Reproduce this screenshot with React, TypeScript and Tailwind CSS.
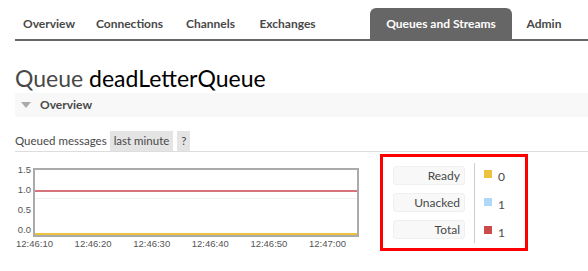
import React from "react";

const tabs = [
  { name: "Overview", w: "w-[68px]" },
  { name: "Connections", w: "w-[93px]" },
  { name: "Channels", w: "w-[69px]" },
  { name: "Exchanges", w: "w-[85px] mr-[40px]" },
  { name: "Queues and Streams", w: "w-[142px]" },
  { name: "Admin", w: "w-[64px]" },
];

const xLabels = ["12:46:10", "12:46:20", "12:46:30", "12:46:40", "12:46:50", "12:47:00"];

const legend = [
  { label: "Ready", color: "bg-[#edc240]", value: "0" },
  { label: "Unacked", color: "bg-[#afd8f8]", value: "1" },
  { label: "Total", color: "bg-[#cb4b4b]", value: "1" },
];

const App = () => {
  return (
    <div className="w-[588px] h-[271px] overflow-hidden bg-white pl-[15px] text-[#484848] font-['Lato','Open_Sans',sans-serif]">
      <nav className="flex items-end h-[41px] border-b-2 border-[#666]">
        {tabs.map((t) => (
          <div
            key={t.name}
            className={`${t.w} shrink-0 h-[31px] flex items-center justify-center whitespace-nowrap text-[12px] font-bold rounded-t-[6px] ${
              t.name === "Queues and Streams" ? "bg-[#666] text-white" : "text-[#484848]"
            }`}
          >
            {t.name}
          </div>
        ))}
      </nav>

      <h1 className="mt-[23px] text-[23px] leading-[28px] font-normal text-[#484848]">
        Queue <span className="text-black">deadLetterQueue</span>
      </h1>

      <div className="mt-[1px] h-[24px] bg-[#f8f8f8] flex items-center pl-[6px] gap-[9px]">
        <span className="w-0 h-0 border-l-[5px] border-r-[5px] border-t-[6px] border-l-transparent border-r-transparent border-t-[#aaa]" />
        <span className="text-[12px] font-bold">Overview</span>
      </div>

      <div className="mt-[15px] flex items-end h-[20px] border-b border-[#ddd] text-[11.5px]">
        <span className="mr-[3px] leading-[20px]">Queued messages</span>
        <span className="bg-[#e4e4e4] px-[4px] leading-[20px]">last minute</span>
        <span className="bg-[#e4e4e4] ml-[4px] px-[4px] leading-[20px]">?</span>
      </div>

      <div className="flex">
        <div className="mt-[16px] w-[350px] font-['Liberation_Sans',sans-serif] text-[9.5px] text-[#555]">
          <div className="flex">
            <div className="w-[16px] flex flex-col justify-between text-right leading-[10px] h-[70px] -mt-[3px]">
              <span>1.5</span>
              <span>1.0</span>
              <span>0.5</span>
              <span>0.0</span>
            </div>
            <div className="ml-[2px] w-[326px] h-[69px] border-2 border-[#aaa] relative">
              <div className="absolute left-0 right-0 top-[43%] h-px bg-[#f2f2f2]" />
              <div className="absolute left-0 right-0 top-[20px] h-[2px] bg-[#d7737a]" />
              <div className="absolute left-0 right-0 bottom-0 h-[2px] bg-[#edc240]" />
            </div>
          </div>
          <div className="flex mt-[1px] leading-[11px] pl-[1px]">
            {xLabels.map((l) => (
              <span key={l} className="w-[58.6px] shrink-0">
                {l}
              </span>
            ))}
          </div>
        </div>

        <div className="mt-[2px] ml-[15px] w-[148px] h-[97px] border-[3px] border-[#ff0000] flex items-center pl-[10px]">
          <div className="flex flex-col gap-[8px] w-[72px]">
            {legend.map((l) => (
              <div
                key={l.label}
                className="h-[19px] bg-[#f8f8f8] border border-[#f0f0f0] rounded-[3px] text-right pr-[4px] text-[12px] leading-[17px]"
              >
                {l.label}
              </div>
            ))}
          </div>
          <div className="ml-[9px] w-px h-[80px] bg-[#ccc]" />
          <div className="ml-[9px] flex flex-col gap-[9px] pt-[3px]">
            {legend.map((l) => (
              <div key={l.label} className="flex items-start h-[19px] text-[12px]">
                <span className={`w-[8px] h-[8px] mt-[3px] ${l.color}`} />
                <span className="ml-[6px] leading-[16px] mt-[2px] text-[#484848]">{l.value}</span>
              </div>
            ))}
          </div>
        </div>
      </div>
    </div>
  );
};

export default App;
